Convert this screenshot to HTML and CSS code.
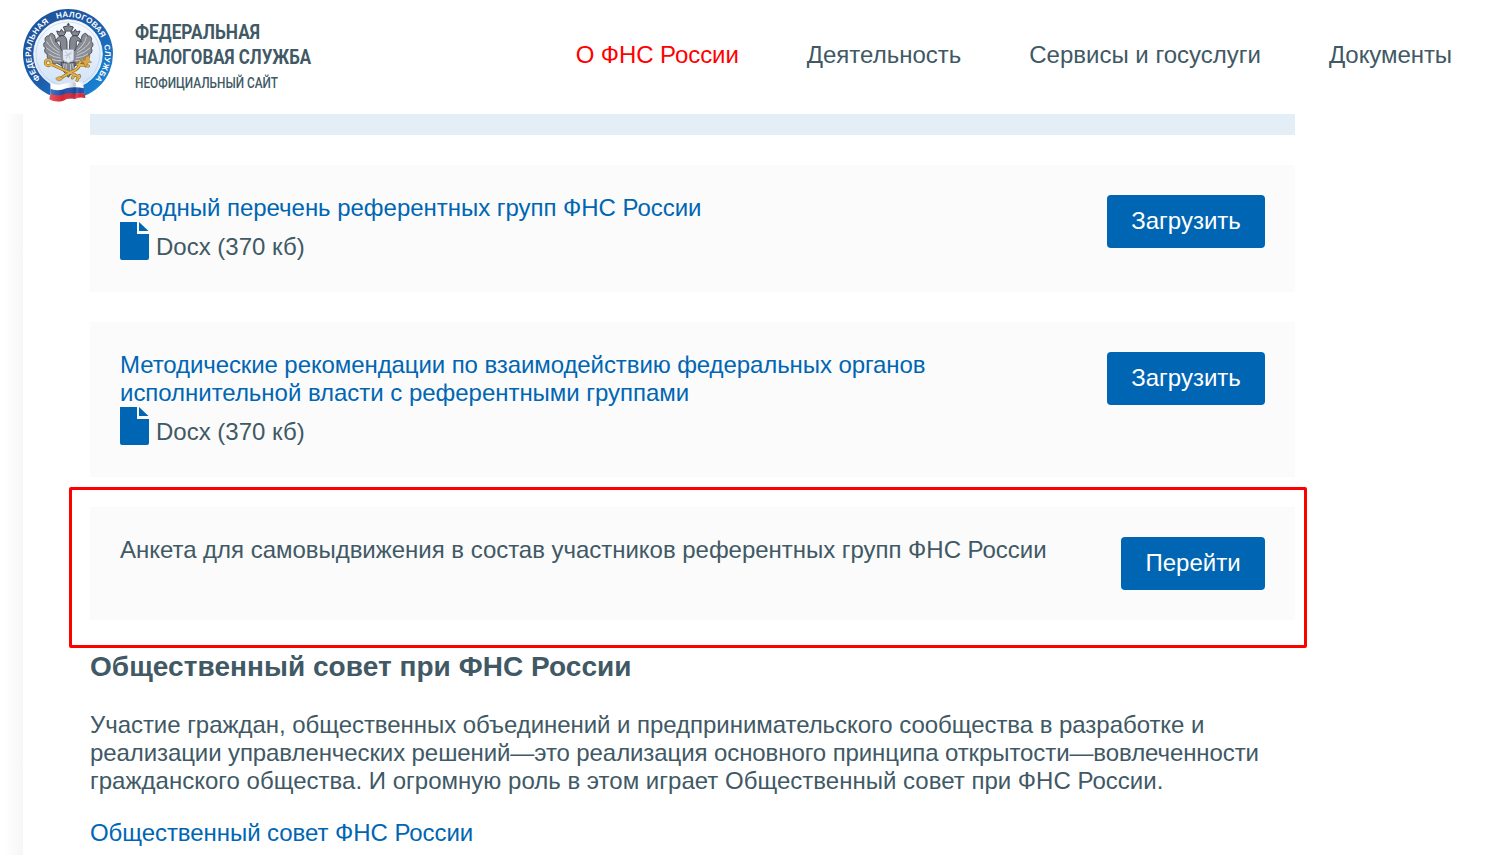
FILE: index.html
```html
<!DOCTYPE html>
<html lang="ru">
<head>
<meta charset="utf-8">
<title>Федеральная налоговая служба</title>
<link rel="stylesheet" href="styles.css">
</head>
<body>
<header class="header">
  <a class="brand">
    <svg class="emblem" viewBox="0 0 94 96" width="94" height="96">
      <defs>
        <linearGradient id="ring" x1="0" y1="0" x2="1" y2="1"><stop offset="0" stop-color="#1e5097"/><stop offset=".5" stop-color="#1d5dab"/><stop offset="1" stop-color="#1690e4"/></linearGradient>
        <linearGradient id="sky" x1="0" y1="0" x2="0" y2="1"><stop offset="0" stop-color="#f8fbff"/><stop offset="1" stop-color="#cfe2f8"/></linearGradient>
        <linearGradient id="fold"><stop offset="0" stop-color="#fff" stop-opacity=".25"/><stop offset=".5" stop-color="#fff" stop-opacity="0"/><stop offset="1" stop-color="#102050" stop-opacity=".3"/></linearGradient>
        <path id="arc" d="M19.500 71.760A37 37 0 1 1 73.200 73.200"/>
      </defs>
      <circle cx="47" cy="47" r="45" fill="url(#ring)"/>
      <circle cx="47" cy="47" r="34.300" fill="url(#sky)" stroke="#fff" stroke-width=".8"/>
      <circle cx="47" cy="47" r="32" fill="none" stroke="#b5cbea" stroke-width=".6"/>
      <g class="ring-text">
        <text><textPath href="#arc" startOffset="0" textLength="65">ФЕДЕРАЛЬНАЯ</textPath></text>
        <text><textPath href="#arc" startOffset="73.600" textLength="53">НАЛОГОВАЯ</textPath></text>
        <text><textPath href="#arc" startOffset="134" textLength="37">СЛУЖБА</textPath></text>
      </g>
      <g transform="scale(.33333) translate(-63 -21)" stroke-linecap="round" stroke-linejoin="round">
        <!-- wings -->
        <g fill="#8b8d94" stroke="#4d5058" stroke-width="3">
          <path d="M188 148C178 140 168 128 164 108C158 97 150 98 147 108C138 106 132 116 137 125C129 128 129 140 137 144C131 151 135 162 143 163C139 173 146 181 154 178C153 190 163 196 170 189L190 200Z"/>
          <path d="M222 148C232 140 242 128 246 108C252 97 260 98 263 108C272 106 278 116 273 125C281 128 281 140 273 144C279 151 275 162 267 163C271 173 264 181 256 178C257 190 247 196 240 189L220 200Z"/>
        </g>
        <g fill="none" stroke="#d5d8df" stroke-width="2.500">
          <path d="M151 111Q155 134 177 150M140 125Q150 143 178 158M140 144Q155 158 179 166M147 162Q160 172 181 174M157 178Q169 184 183 182"/>
          <path d="M259 111Q255 134 233 150M270 125Q260 143 232 158M270 144Q255 158 231 166M263 162Q250 172 229 174M253 178Q241 184 227 182"/>
        </g>
        <!-- heads, necks and crowns -->
        <g fill="#858891" stroke="#454952" stroke-width="3">
          <path d="M201 150V130C201 110 190 102 180 109C173 112 168 118 166 125L178 122C184 127 178 133 184 150Z"/>
          <path d="M209 150V130C209 110 220 102 230 109C237 112 242 118 244 125L232 122C226 127 232 133 226 150Z"/>
          <path d="M175 105L170 93L180 96L184 88L190 96L198 95L192 106ZM235 105L240 93L230 96L226 88L220 96L212 95L218 106Z"/>
          <path d="M195 92L190 81Q205 73 220 81L215 92ZM205 76V70M202 73H208"/>
          <path d="M184 188H226L219 214L205 232L191 214Z"/>
        </g>
        <path d="M193 192L187 214M199 193L197 222M211 193L213 222M217 192L223 214" stroke="#ced2da" stroke-width="2.500"/>
        <path d="M188 148H222V177Q222 184 214 184L205 190L196 184Q188 184 188 177Z" fill="#e3eaf5" stroke="#808791" stroke-width="2"/>
        <path d="M197 155L204 164L199 175M213 155L205 163L211 176M195 167L215 161" fill="none" stroke="#b2bdcc" stroke-width="2.500"/>
        <!-- crossed gold key and staff -->
        <g fill="none" stroke="#8b651c" stroke-width="9"><circle cx="145" cy="188" r="9"/><path d="M154 193L238 231M177 237L217 214Q240 207 239 187L261 178M233 193L265 198M224 223L217 234M238 227L231 241"/></g>
        <g fill="none" stroke="#e4b34c" stroke-width="5.500"><circle cx="145" cy="188" r="9"/><path d="M154 193L238 231M177 237L217 214Q240 207 239 187L261 178M233 193L265 198M224 223L217 234M238 227L231 241"/></g>
        <path d="M257 171L270 166L267 180L275 187L263 189L257 203L252 190L243 184L255 181Z" fill="#dca642" stroke="#94702b" stroke-width="1.500"/>
        <path d="M168 234Q179 225 190 233Q183 247 170 240Z" fill="#dfae50" stroke="#94702b" stroke-width="1.500"/>
        <!-- tricolour ribbon -->
        <path d="M151 250Q174 258 198 250Q224 242 249 248L256 294Q240 290 225 297Q206 290 190 302Q166 309 148 298Q154 274 151 250Z" fill="#fff"/>
        <path d="M152 266Q174 276 199 265Q226 258 252 265L254 280Q238 280 222 282Q198 281 185 288Q168 291 151 283Z" fill="#164eaa"/>
        <path d="M151 281Q169 289 187 284Q206 276 223 281Q239 278 254 280L256 294Q240 290 225 297Q206 290 190 302Q166 309 148 298Z" fill="#db2432"/>
        <path d="M151 250Q174 258 198 250Q224 242 228 250L222 297Q206 290 190 302Q166 309 148 298Q154 274 151 250Z" fill="url(#fold)"/>
        <path d="M227 249L249 248L256 294Q240 290 225 297Q233 274 227 249Z" fill="url(#fold)"/>
      </g>
    </svg>
    <span class="brand-text">
      <span class="brand-name brand-name-top">ФЕДЕРАЛЬНАЯ</span>
      <span class="brand-name">НАЛОГОВАЯ СЛУЖБА</span>
      <span class="brand-note">НЕОФИЦИАЛЬНЫЙ САЙТ</span>
    </span>
  </a>
  <nav class="nav"><a class="active">О ФНС России</a><a>Деятельность</a><a>Сервисы и госуслуги</a><a class="nav-last">Документы</a></nav>
</header>
<main class="page">
  <div class="banner"></div>
  <section class="card">
    <div class="info"><a class="link snug">Сводный перечень референтных групп ФНС России</a>
      <div class="file"><svg width="29" height="38" viewBox="0 0 29 38"><path d="M0 0H17V12H29V36Q29 38 27 38H2Q0 38 0 36ZM19 0L28.500 9H19Z" fill="#0066b3"/></svg><span>Docx (370 кб)</span></div></div>
    <a class="button">Загрузить</a>
  </section>
  <section class="card">
    <div class="info"><a class="link"><span class="tight">Методические рекомендации по взаимодействию федеральных органов</span><br><span class="snug">исполнительной власти с референтными группами</span></a>
      <div class="file"><svg width="29" height="38" viewBox="0 0 29 38"><path d="M0 0H17V12H29V36Q29 38 27 38H2Q0 38 0 36ZM19 0L28.500 9H19Z" fill="#0066b3"/></svg><span>Docx (370 кб)</span></div></div>
    <a class="button">Загрузить</a>
  </section>
  <section class="card card-short">
    <div class="info snug">Анкета для самовыдвижения в состав участников референтных групп ФНС России</div>
    <a class="button button-go">Перейти</a>
    <div class="highlight"></div>
  </section>
  <h2>Общественный совет при ФНС России</h2>
  <p><span class="close">Участие граждан, общественных объединений и предпринимательского сообщества в разработке и</span><br><span class="tight">реализации управленческих решений—это реализация основного принципа открытости—вовлеченности</span><br><span class="loose">гражданского общества. И огромную роль в этом играет Общественный совет при ФНС России.</span></p>
  <a class="link council">Общественный совет ФНС России</a>
</main>
</body>
</html>
```
FILE: styles.css
```css
* { box-sizing: border-box; }
body { margin: 0; height: 855px; overflow: hidden; background: #fff; color: #405965; font: 24px/28px "Liberation Sans", Arial, sans-serif; }
.header { display: flex; justify-content: space-between; height: 114px; padding: 7px 37px 0 21px; }
.brand { display: flex; gap: 20px; }
.ring-text { font: bold 8px "Liberation Sans", sans-serif; fill: #fff; }
.brand-text { display: flex; flex-direction: column; align-items: flex-start; padding-top: 13px; }
.brand-name { font: bold 20.5px/25px Roboto, sans-serif; transform: scaleX(.822); transform-origin: left; white-space: nowrap; }
.brand-name-top { transform: scaleX(.842); }
.brand-note { font: 500 14px/26px Roboto, sans-serif; transform: scaleX(.845); transform-origin: left; white-space: nowrap; }
.nav { display: flex; gap: 68px; padding-top: 34px; white-space: nowrap; }
.nav-last { letter-spacing: -.07px; }
.active { color: #f00; letter-spacing: -.08px; }
.page { height: 741px; padding: 0 194px 0 90px; background: linear-gradient(90deg, #fff 4px, #f6f6f6 23px, #fff 23px); }
.banner { height: 21px; margin-bottom: 30px; background: #e4eef7; }
.card { position: relative; display: flex; justify-content: space-between; align-items: flex-start; margin-bottom: 30px; padding: 30px 30px 32px; background: #fbfbfb; }
.card-short { height: 113px; margin-bottom: 33px; }
.info { margin-top: -1px; white-space: nowrap; }
.link { color: #0066b3; white-space: nowrap; }
.snug { letter-spacing: -.03px; }
.close { letter-spacing: -.045px; }
.tight { letter-spacing: -.09px; }
.loose { letter-spacing: .01px; }
.council { letter-spacing: -.06px; }
.file { display: flex; align-items: flex-end; gap: 7px; height: 38px; }
.file span { margin-bottom: -1px; }
.button { width: 158px; height: 53px; border-radius: 4px; background: #0066b3; color: #fff; line-height: 52px; text-align: center; }
.button-go { width: 144px; }
.highlight { position: absolute; inset: -20px -12px -28px -21px; border: 3px solid #f00; border-radius: 2px; }
h2 { margin: 0; font-size: 28px; line-height: 28px; letter-spacing: .05px; white-space: nowrap; }
p { margin: 30px 0 24px; white-space: nowrap; }
```
